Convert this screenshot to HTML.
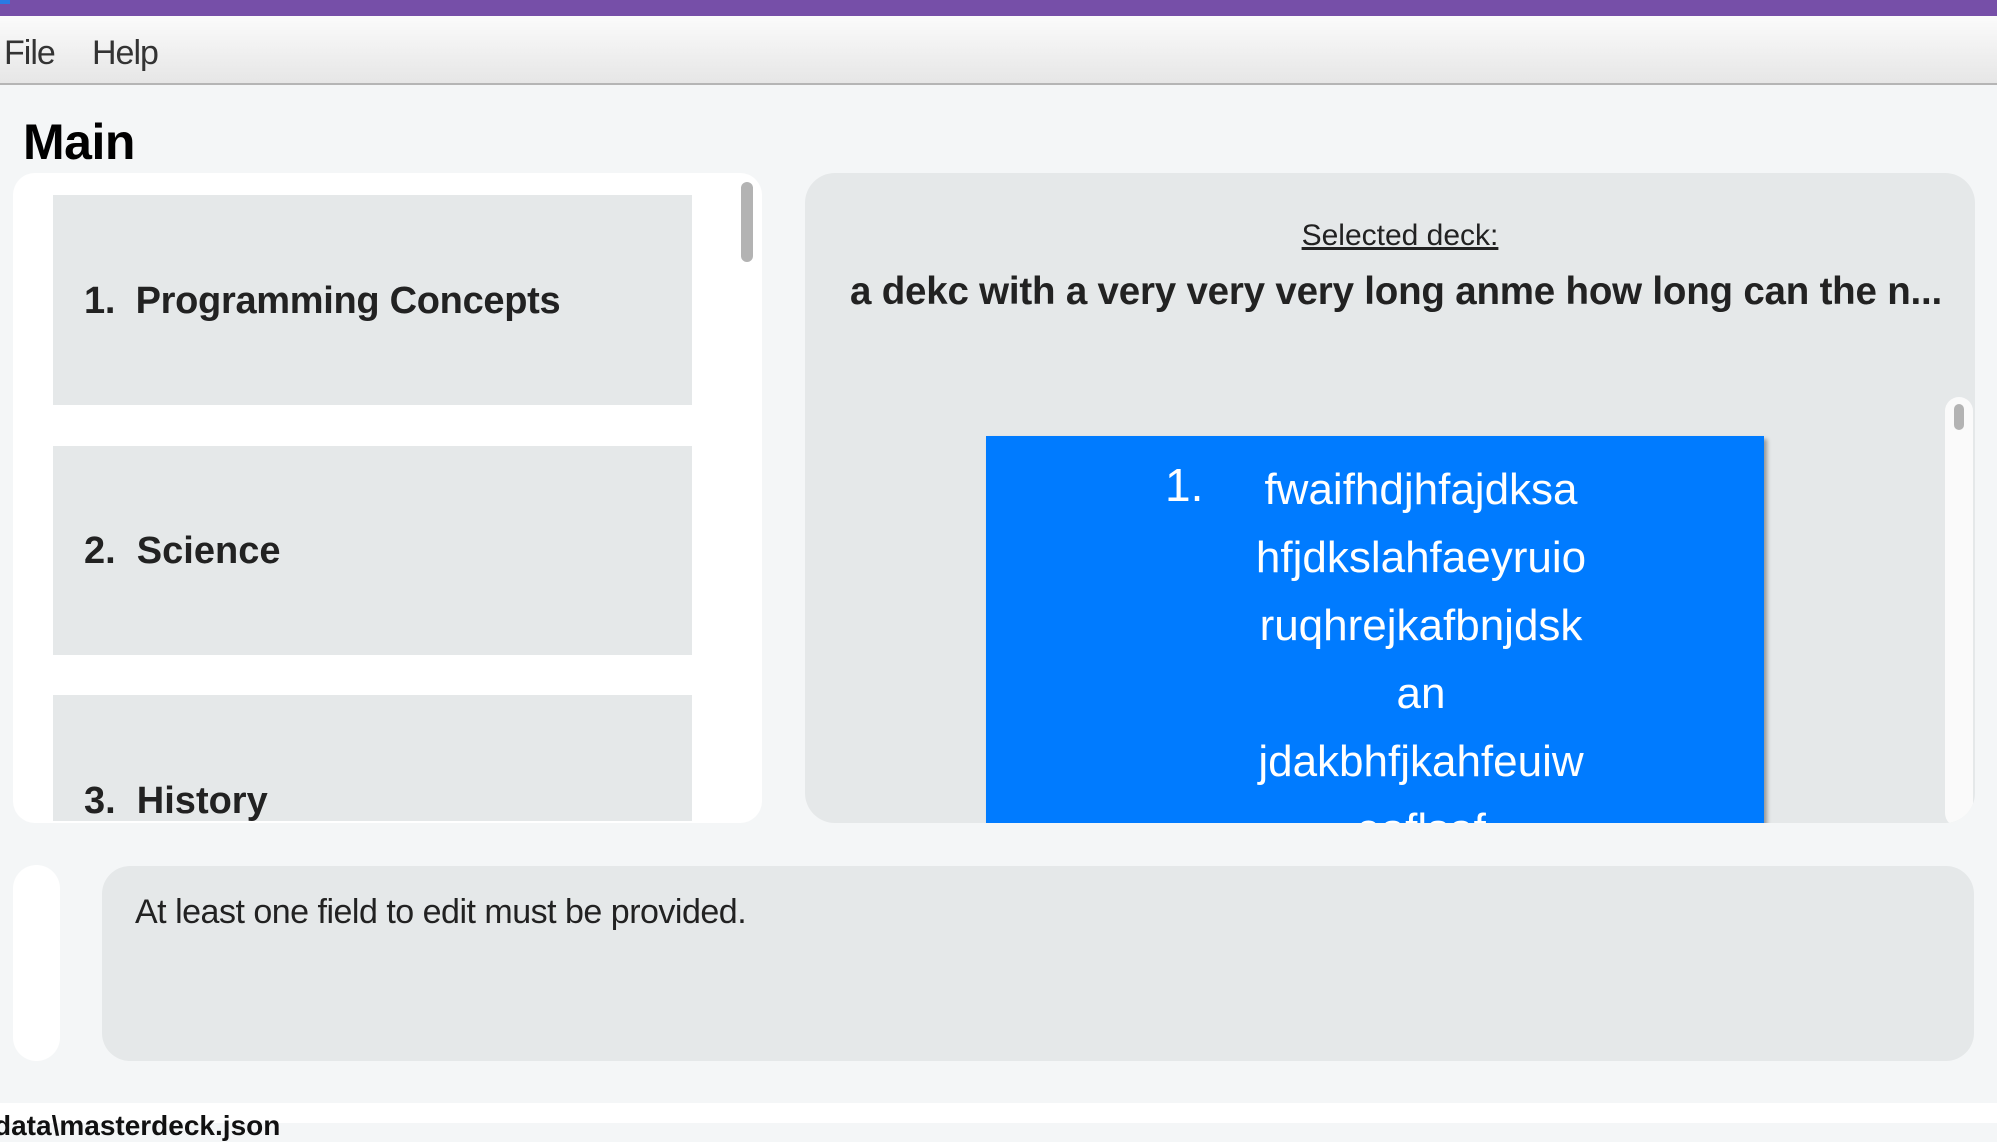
<!DOCTYPE html>
<html><head><meta charset="utf-8"><style>
*{margin:0;padding:0;box-sizing:border-box}
body{width:1997px;height:1123px;overflow:hidden;background:#f4f6f7;font-family:"Liberation Sans",sans-serif;position:relative}
.a{position:absolute}
</style></head><body>
<div class="a" style="left:0;top:0;width:1997px;height:16px;background:#764fa8"></div>
<div class="a" style="left:0;top:0;width:10px;height:4px;background:#2a7be4"></div>
<div class="a" style="left:0;top:16px;width:1997px;height:69px;background:linear-gradient(#fbfbfb,#e6e6e6);border-bottom:2px solid #b5b5b5"></div>
<div class="a" style="left:4px;top:34px;font-size:34px;color:#333;letter-spacing:-1px">File</div>
<div class="a" style="left:92px;top:34px;font-size:34px;color:#333;letter-spacing:-1px">Help</div>
<div class="a" style="left:23px;top:113px;font-size:50px;font-weight:bold;color:#000;letter-spacing:-0.5px">Main</div>

<div class="a" style="left:13px;top:173px;width:749px;height:650px;background:#fff;border-radius:22px"></div>
<div class="a" style="left:53px;top:195px;width:639px;height:210px;background:#e5e8e9"></div>
<div class="a" style="left:53px;top:446px;width:639px;height:209px;background:#e5e8e9"></div>
<div class="a" style="left:53px;top:695px;width:639px;height:126px;background:#e5e8e9"></div>
<div class="a" style="left:84px;top:280px;font-size:38px;font-weight:bold;color:#222;letter-spacing:-0.3px">1.&nbsp; Programming Concepts</div>
<div class="a" style="left:84px;top:530px;font-size:38px;font-weight:bold;color:#222">2.&nbsp; Science</div>
<div class="a" style="left:84px;top:780px;font-size:38px;font-weight:bold;color:#222;height:41px;overflow:hidden">3.&nbsp; History</div>
<div class="a" style="left:741px;top:182px;width:12px;height:80px;background:#b3b3b3;border-radius:6px"></div>

<div class="a" style="left:805px;top:173px;width:1170px;height:650px;background:#e5e8e9;border-radius:30px;overflow:hidden">
<div class="a" style="left:0;width:1190px;top:46px;text-align:center;font-size:30px;text-decoration:underline;color:#222">Selected deck:</div>
<div class="a" style="left:45px;top:97px;font-size:38.5px;font-weight:bold;color:#222;white-space:nowrap;letter-spacing:-0.2px">a dekc with a very very very long anme how long can the n...</div>
<div class="a" style="left:181px;top:263px;width:778px;height:400px;background:#007bff;box-shadow:3px 3px 4px rgba(0,0,0,.35);color:#fff;font-size:44px">
<div class="a" style="left:179px;top:22px;font-size:46px">1.</div>
<div class="a" style="left:235px;top:20px;width:400px;text-align:center;line-height:68px">fwaifhdjhfajdksa<br>hfjdkslahfaeyruio<br>ruqhrejkafbnjdsk<br>an<br>jdakbhfjkahfeuiw<br>eaflsaf</div>
</div>
<div class="a" style="left:1140px;top:224px;width:28px;height:430px;background:#fafafa;border-radius:14px"></div>
<div class="a" style="left:1149px;top:231px;width:10px;height:26px;background:#b3b3b3;border-radius:5px"></div>
</div>

<div class="a" style="left:13px;top:865px;width:47px;height:196px;background:#fff;border-radius:24px"></div>
<div class="a" style="left:102px;top:866px;width:1872px;height:195px;background:#e5e8e9;border-radius:28px"></div>
<div class="a" style="left:135px;top:893px;font-size:34px;color:#222;letter-spacing:-0.5px">At least one field to edit must be provided.</div>
<div class="a" style="left:0;top:1103px;width:1997px;height:20px;background:#fff"></div>
<div class="a" style="left:-6px;top:1110px;font-size:28px;font-weight:bold;color:#111;white-space:nowrap">data\masterdeck.json</div>
</body></html>
